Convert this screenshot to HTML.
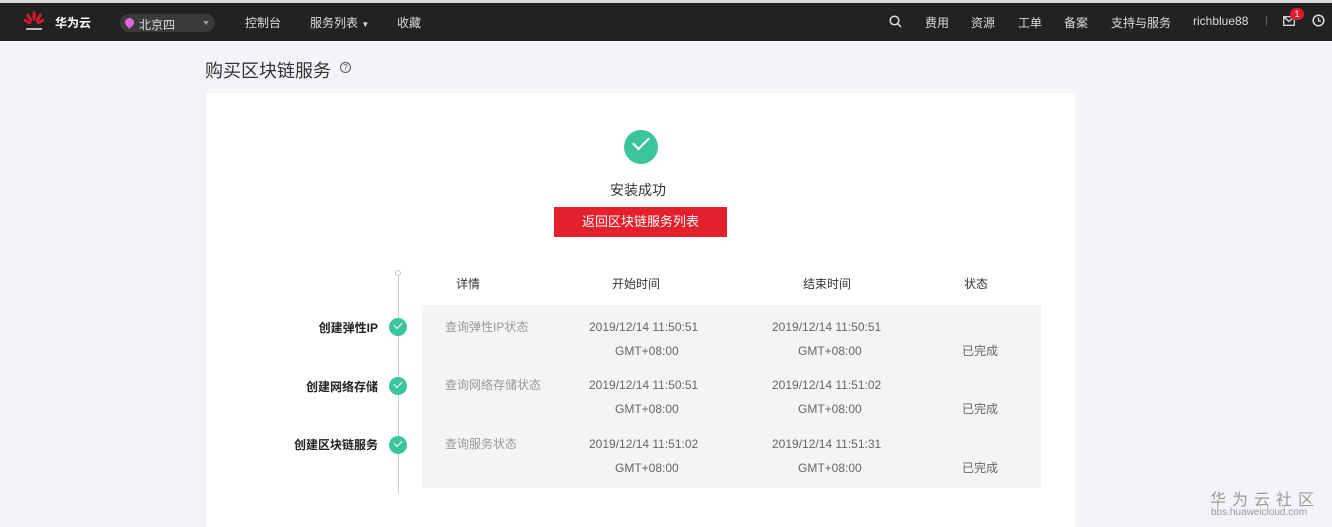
<!DOCTYPE html><html><head><meta charset="utf-8"><style>
*{margin:0;padding:0;box-sizing:border-box}
body{width:1332px;height:527px;overflow:hidden;background:#f3f4f7;font-family:"Liberation Sans","Noto Sans CJK SC",sans-serif;position:relative;color:#333}
.a{position:absolute;white-space:nowrap}
.top{position:absolute;left:0;top:0;width:1332px;height:41px;background:#222;border-top:3px solid #d9d9d9}
.nav{color:#ddd;font-size:12px;top:14px}
.card{position:absolute;left:206px;top:93px;width:869px;height:434px;background:#fff}
.tbl{position:absolute;left:422px;top:305px;width:619px;height:183px;background:#f3f4f6}
.h{font-size:12px;color:#333;top:275px}
.c{font-size:12px;color:#666}
.g{font-size:12px;color:#999}
.ck{position:absolute;width:18px;height:18px;border-radius:50%;background:#3cc49b;left:389px}
.ck:after{content:"";position:absolute;left:5px;top:4px;width:7px;height:4px;border-left:1.5px solid #fff;border-bottom:1.5px solid #fff;transform:rotate(-45deg)}
.lb{font-size:12px;font-weight:bold;color:#222;right:954px}
</style></head><body>
<div class="top"></div>
<svg class="a" style="left:24px;top:10px" width="20" height="22" viewBox="0 0 20 22"><g fill="#e0182d"><ellipse cx="10" cy="6" rx="1.6" ry="5"/><ellipse cx="6" cy="7.5" rx="1.6" ry="5" transform="rotate(-30 6 9)"/><ellipse cx="14" cy="7.5" rx="1.6" ry="5" transform="rotate(30 14 9)"/><ellipse cx="4" cy="11" rx="1.5" ry="4.5" transform="rotate(-60 4 12)"/><ellipse cx="16" cy="11" rx="1.5" ry="4.5" transform="rotate(60 16 12)"/></g><rect x="2" y="18" width="16" height="2" fill="#bbb"/></svg>
<div class="a nav" style="left:55px;top:14px;color:#fff;font-weight:bold">华为云</div>
<div class="a" style="left:120px;top:14px;width:95px;height:18px;border-radius:9px;background:#3a3a3a"></div>
<div class="a" style="left:125px;top:18px;width:9px;height:9px;border-radius:50% 50% 50% 0;transform:rotate(-45deg);background:#e066e0"></div>
<div class="a nav" style="left:139px;top:16px;color:#ddd">北京四</div>
<div class="a" style="left:203px;top:21px;border:3px solid transparent;border-top:4px solid #999"></div>
<div class="a nav" style="left:245px">控制台</div>
<div class="a nav" style="left:310px">服务列表 <span style="font-size:8px">▼</span></div>
<div class="a nav" style="left:397px">收藏</div>
<svg class="a" style="left:889px;top:15px" width="13" height="13"><circle cx="5.5" cy="5.5" r="4.3" fill="none" stroke="#ddd" stroke-width="1.5"/><path d="M8.5 8.5L12 12" stroke="#ddd" stroke-width="1.5"/></svg>
<div class="a nav" style="left:925px">费用</div>
<div class="a nav" style="left:971px">资源</div>
<div class="a nav" style="left:1018px">工单</div>
<div class="a nav" style="left:1064px">备案</div>
<div class="a nav" style="left:1111px">支持与服务</div>
<div class="a nav" style="left:1193px">richblue88</div>
<div class="a" style="left:1266px;top:16px;width:1px;height:10px;background:#666"></div>
<svg class="a" style="left:1283px;top:16px" width="12" height="10"><rect x=".7" y=".7" width="10.6" height="8.6" fill="none" stroke="#ddd" stroke-width="1.3"/><path d="M1 1L6 5.5 11 1" fill="none" stroke="#ddd" stroke-width="1.3"/></svg>
<div class="a" style="left:1290px;top:8px;width:14px;height:12px;border-radius:6px;background:#e0182d;color:#fff;font-size:9px;text-align:center;line-height:12px">1</div>
<svg class="a" style="left:1312px;top:14px" width="13" height="13"><circle cx="6.5" cy="6.5" r="5.3" fill="none" stroke="#ddd" stroke-width="1.5"/><path d="M6.5 3.5V7H9" fill="none" stroke="#ddd" stroke-width="1.3"/></svg>
<div class="a" style="left:205px;top:57px;font-size:18px;color:#333">购买区块链服务</div>
<div class="a" style="left:340px;top:62px;width:11px;height:11px;border:1px solid #555;border-radius:50%;font-size:8px;text-align:center;line-height:9px;color:#555">?</div>
<div class="card"></div>
<div class="a" style="left:624px;top:130px;width:34px;height:34px;border-radius:50%;background:#3cc49b"></div>
<div class="a" style="left:633px;top:137px;width:16px;height:9px;border-left:2.5px solid #fff;border-bottom:2.5px solid #fff;transform:rotate(-45deg)"></div>
<div class="a" style="left:610px;top:180px;font-size:14px;color:#333">安装成功</div>
<div class="a" style="left:554px;top:207px;width:173px;height:30px;background:#e4202d;color:#fff;font-size:13px;text-align:center;line-height:30px">返回区块链服务列表</div>
<div class="tbl"></div>
<div class="a" style="left:398px;top:276px;width:1px;height:218px;background:#ccc"></div>
<div class="a" style="left:395px;top:270px;width:6px;height:6px;border:1px solid #ccc;border-radius:50%;background:#fff"></div>
<div class="a h" style="left:456px">详情</div>
<div class="a h" style="left:612px">开始时间</div>
<div class="a h" style="left:803px">结束时间</div>
<div class="a h" style="left:964px">状态</div>
<div class="ck" style="top:318px"></div><div class="ck" style="top:377px"></div><div class="ck" style="top:436px"></div>
<div class="a lb" style="top:319px">创建弹性IP</div>
<div class="a lb" style="top:378px">创建网络存储</div>
<div class="a lb" style="top:436px">创建区块链服务</div>
<div class="a g" style="left:445px;top:318px">查询弹性IP状态</div>
<div class="a g" style="left:445px;top:376px">查询网络存储状态</div>
<div class="a g" style="left:445px;top:435px">查询服务状态</div>
<div class="a c" style="left:589px;top:320px">2019/12/14 11:50:51</div><div class="a c" style="left:615px;top:344px">GMT+08:00</div>
<div class="a c" style="left:772px;top:320px">2019/12/14 11:50:51</div><div class="a c" style="left:798px;top:344px">GMT+08:00</div>
<div class="a c" style="left:962px;top:342px">已完成</div>
<div class="a c" style="left:589px;top:378px">2019/12/14 11:50:51</div><div class="a c" style="left:615px;top:402px">GMT+08:00</div>
<div class="a c" style="left:772px;top:378px">2019/12/14 11:51:02</div><div class="a c" style="left:798px;top:402px">GMT+08:00</div>
<div class="a c" style="left:962px;top:400px">已完成</div>
<div class="a c" style="left:589px;top:437px">2019/12/14 11:51:02</div><div class="a c" style="left:615px;top:461px">GMT+08:00</div>
<div class="a c" style="left:772px;top:437px">2019/12/14 11:51:31</div><div class="a c" style="left:798px;top:461px">GMT+08:00</div>
<div class="a c" style="left:962px;top:459px">已完成</div>
<div class="a" style="left:1210px;top:486px;font-size:16px;color:#999;letter-spacing:6px">华为云社区</div>
<div class="a" style="left:1211px;top:507px;font-size:10px;color:#999">bbs.huaweicloud.com</div>
</body></html>
